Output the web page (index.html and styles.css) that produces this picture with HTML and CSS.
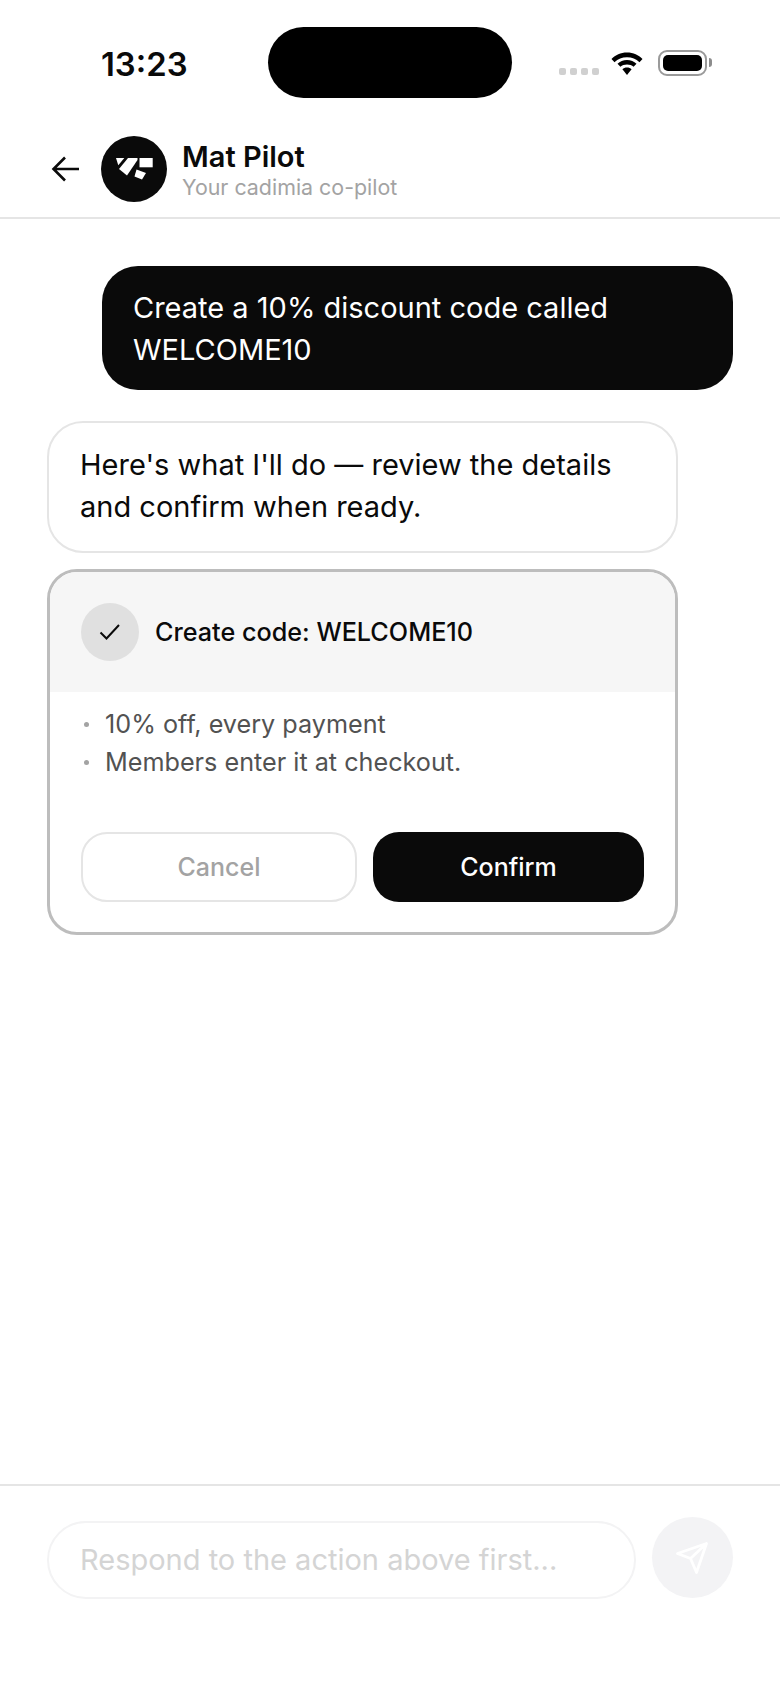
FILE: index.html
```html
<!DOCTYPE html>
<html lang="en">
<head>
    <meta charset="UTF-8">
    <meta name="viewport" content="width=device-width, initial-scale=1.0">
    <title>Mat Pilot</title>
    <link rel="stylesheet" href="styles.css">
</head>
<body>
    <div class="phone">
        <div class="status-bar">
            <span class="time">13:23</span>
            <div class="island"></div>
            <div class="status-icons">
                <div class="signal"><i></i><i></i><i></i><i></i></div>
                <svg class="wifi" width="34" height="26" viewBox="0 0 34 26">
                    <path d="M17 2.500C10.500 2.500 5.500 5 1.500 9l3 3.200C8 9 12 7.200 17 7.200s9 1.800 12.500 5L32.500 9C28.500 5 23.500 2.500 17 2.500z" fill="#000"/>
                    <path d="M17 10c-3.800 0-7 1.300-9.500 3.800l2.900 3C12.200 15.200 14.300 14.400 17 14.400s4.800.8 6.600 2.400l2.900-3C24 11.300 20.800 10 17 10z" fill="#000"/>
                    <path d="M17 17.500c-1.900 0-3.400.6-4.600 1.700L17 25l4.600-5.800c-1.200-1.100-2.700-1.700-4.600-1.700z" fill="#000"/>
                </svg>
                <div class="battery"><div class="battery-fill"></div></div>
                <div class="battery-cap"></div>
            </div>
        </div>

        <header class="chat-header">
            <svg class="back" width="30" height="28" viewBox="0 0 30 28">
                <path d="M28 14H3M14 2.500 2.500 14 14 25.500" fill="none" stroke="#0a0a0a" stroke-width="2.600"/>
            </svg>
            <div class="avatar">
                <svg width="37" height="22" viewBox="0 0 37 22">
                    <path d="M0 0H8.300L2.300 7.300z" fill="#fff"/>
                    <path d="M12 0H21.500V2L11 17.500 3 11z" fill="#fff"/>
                    <path d="M23.500 0H36.700V9.300H23.500z" fill="#fff"/>
                    <path d="M20.500 11.500 30 15 26 21.500 18.500 18.500z" fill="#fff"/>
                </svg>
            </div>
            <div class="header-text">
                <h1>Mat Pilot</h1>
                <p>Your cadimia co-pilot</p>
            </div>
        </header>

        <main class="messages">
            <div class="bubble user">Create a 10% discount code called WELCOME10</div>
            <div class="bubble bot">Here's what I'll do — review the details and confirm when ready.</div>
            <div class="action-card">
                <div class="action-head">
                    <div class="check">
                        <svg width="22" height="18" viewBox="0 0 22 18">
                            <path d="M1.500 9.500 7.500 15.500 20 2" fill="none" stroke="#0a0a0a" stroke-width="2"/>
                        </svg>
                    </div>
                    <span class="action-title">Create code: WELCOME10</span>
                </div>
                <ul class="action-list">
                    <li>10% off, every payment</li>
                    <li>Members enter it at checkout.</li>
                </ul>
                <div class="action-buttons">
                    <button class="btn-cancel">Cancel</button>
                    <button class="btn-confirm">Confirm</button>
                </div>
            </div>
        </main>

        <footer class="composer">
            <div class="composer-input">Respond to the action above first...</div>
            <div class="send">
                <svg width="35" height="35" viewBox="0 0 35 35">
                    <path d="M31.500 3.500 2.500 13.500 15.500 18.500 21.500 32.500zM31.500 3.500 15.500 18.500" fill="none" stroke="#fff" stroke-width="2.800" stroke-linejoin="round" stroke-linecap="round"/>
                </svg>
            </div>
        </footer>
    </div>
</body>
</html>
```

FILE: styles.css
```css
* {
    margin: 0;
    padding: 0;
    box-sizing: border-box;
}

body {
    font-family: Inter, "Liberation Sans", sans-serif;
    background: #fff;
    color: #0a0a0a;
}

.phone {
    width: 780px;
    height: 1696px;
    display: flex;
    flex-direction: column;
    overflow: hidden;
}

.status-bar {
    height: 126px;
    padding: 27px 0 0 101px;
    display: flex;
    align-items: flex-start;
}

.time {
    width: 167px;
    margin-top: 19px;
    font-size: 32.800px;
    line-height: 36px;
    font-weight: 600;
    color: #0a0a0a;
}

.island {
    width: 244px;
    height: 71px;
    background: #000;
    border-radius: 36px;
}

.status-icons {
    margin-left: 47px;
    margin-top: 23px;
    display: flex;
    align-items: flex-start;
}

.signal {
    display: flex;
    gap: 4px;
    margin-top: 18px;
    margin-right: 11px;
}

.signal i {
    width: 7px;
    height: 7px;
    border-radius: 2px;
    background: #d0d0d0;
}

.battery {
    width: 49px;
    height: 26px;
    margin-left: 14px;
    padding: 3px;
    border: 2px solid #9a9a9a;
    border-radius: 9px;
}

.battery-fill {
    height: 100%;
    background: #000;
    border-radius: 5px;
}

.battery-cap {
    width: 3px;
    height: 9px;
    margin: 8px 0 0 2px;
    background: #8c8c8c;
    border-radius: 0 3px 3px 0;
}

.chat-header {
    height: 93px;
    padding: 10px 0 0 51px;
    display: flex;
    align-items: flex-start;
    border-bottom: 2px solid #e5e5e5;
}

.back {
    margin-top: 19px;
}

.avatar {
    width: 66px;
    height: 66px;
    margin-left: 20px;
    border-radius: 50%;
    background: #0a0a0a;
    display: flex;
    align-items: center;
    justify-content: center;
}

.header-text {
    margin-left: 15px;
    padding-top: 3px;
}

.header-text h1 {
    font-size: 29px;
    line-height: 35px;
    font-weight: 600;
}

.header-text p {
    font-size: 21.400px;
    line-height: 27px;
    color: #a3a3a3;
}

.messages {
    flex: 1;
    padding: 47px 47px 0;
    display: flex;
    flex-direction: column;
}

.bubble {
    width: 631px;
    font-size: 29px;
    line-height: 42px;
}

.user {
    align-self: flex-end;
    padding: 21px 31px 19px;
    background: #0a0a0a;
    color: #fff;
    border-radius: 36px;
}

.bot {
    margin-top: 31px;
    padding: 21px 31px 23px;
    border: 2px solid #e5e5e5;
    border-radius: 36px;
}

.action-card {
    width: 631px;
    height: 366px;
    margin-top: 16px;
    border: 3px solid #bdbdbd;
    border-radius: 30px;
    overflow: hidden;
}

.action-head {
    height: 120px;
    padding: 31px 0 0 31px;
    display: flex;
    align-items: flex-start;
    background: #f6f6f6;
}

.check {
    width: 58px;
    height: 58px;
    border-radius: 50%;
    background: #e0e0e0;
    display: flex;
    align-items: center;
    justify-content: center;
}

.action-title {
    margin-left: 16px;
    font-size: 25.200px;
    line-height: 58px;
    font-weight: 500;
}

.action-list {
    list-style: none;
    padding: 13px 31px 0;
}

.action-list li {
    position: relative;
    padding-left: 24px;
    font-size: 25.200px;
    line-height: 38px;
    color: #525252;
}

.action-list li::before {
    content: "";
    position: absolute;
    left: 3px;
    top: 17px;
    width: 5px;
    height: 5px;
    border-radius: 50%;
    background: #a3a3a3;
}

.action-buttons {
    display: flex;
    gap: 16px;
    padding: 51px 31px 0;
}

.action-buttons button {
    height: 70px;
    border-radius: 26px;
    font-family: inherit;
    font-size: 25px;
    font-weight: 500;
}

.btn-cancel {
    width: 277px;
    background: #fff;
    border: 2px solid #e5e5e5;
    color: #a3a3a3;
}

.btn-confirm {
    width: 272px;
    background: #0a0a0a;
    border: none;
    color: #fff;
}

.composer {
    height: 212px;
    padding: 31px 47px 0;
    display: flex;
    align-items: flex-start;
    gap: 16px;
    border-top: 2px solid #e5e5e5;
}

.composer-input {
    width: 589px;
    height: 78px;
    margin-top: 4px;
    padding-left: 31px;
    border: 2px solid #f3f3f4;
    border-radius: 39px;
    font-size: 29px;
    line-height: 74px;
    color: #d4d4d4;
}

.send {
    width: 81px;
    height: 81px;
    border-radius: 50%;
    background: #f3f3f5;
    display: flex;
    align-items: center;
    justify-content: center;
}
```
